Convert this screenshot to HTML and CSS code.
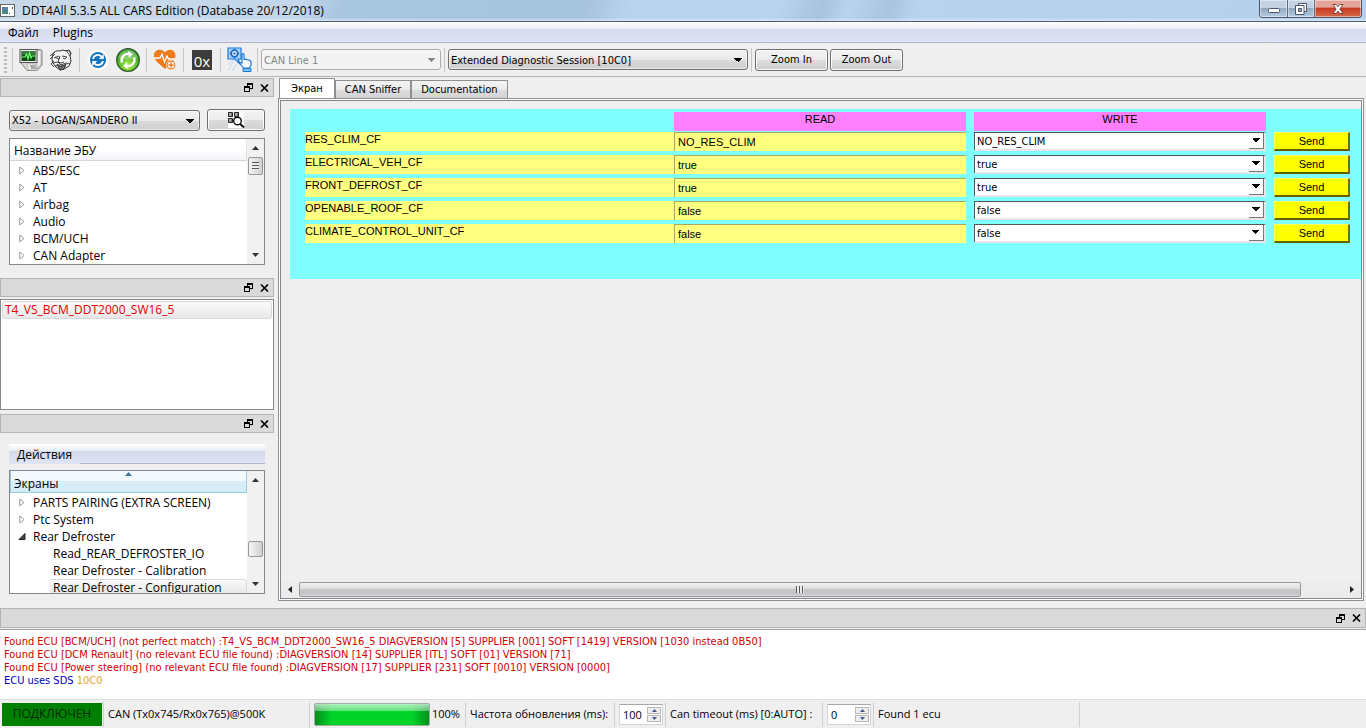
FILE: index.html
```html
<!DOCTYPE html>
<html lang="ru">
<head>
<meta charset="utf-8">
<title>DDT4All</title>
<link rel="stylesheet" href="styles.css">
</head>
<body>
<svg class="defs" aria-hidden="true">
  <symbol id="float" viewBox="0 0 9 9"><path d="M3 0h6v6H6V5h2V2H4v1H3zM0 3h6v6H0zM1 5v3h4V5z" fill="#000" fill-rule="evenodd"/></symbol>
  <symbol id="close" viewBox="0 0 9 8"><path d="M1 0.5l7 7M8 0.5l-7 7" stroke="#000" stroke-width="1.6" fill="none"/></symbol>
  <symbol id="closed" viewBox="0 0 6 9"><path d="M.8 1v7L5 4.500z" fill="#fff" stroke="#999"/></symbol>
  <symbol id="open" viewBox="0 0 7 7"><path d="M6.500 0.500v6h-6z" fill="#444" stroke="#222"/></symbol>
  <symbol id="up" viewBox="0 0 7 4"><path d="M0 4L3.500 0 7 4z" fill="#333"/></symbol>
  <symbol id="down" viewBox="0 0 7 4"><path d="M0 0h7L3.500 4z" fill="#333"/></symbol>
</svg>

<header class="titlebar">
  <svg class="app-icon" width="15" height="13" viewBox="0 0 15 13"><rect x=".5" y=".5" width="14" height="12" fill="#fff" stroke="#666"/><rect x="2" y="3" width="6" height="7" fill="#4a8a80"/><path d="M2 3h6v3H2z" fill="#5a7fa8"/><path d="M9.500 9v1M12.500 3v2" stroke="#555"/></svg>
  <h1>DDT4All 5.3.5 ALL CARS Edition (Database 20/12/2018)</h1>
  <div class="win-buttons">
    <button class="win min" aria-label="Minimize"><svg width="12" height="5"><rect x=".5" y=".5" width="11" height="4" rx="1" fill="#fff" stroke="#4a5568"/></svg></button>
    <button class="win max" aria-label="Restore"><svg width="12" height="12"><path d="M3.500.5h8v8h-8z" fill="#fff" stroke="#4a5568"/><path d="M.5 2.500h8.500v9H.5z" fill="#fff" stroke="#4a5568"/><path d="M3.500 5.500h3v3h-3z" fill="#9ab" stroke="#4a5568"/></svg></button>
    <button class="win shut" aria-label="Close"><svg width="12" height="10"><path d="M1 .5h3l2 2.200L8 .5h3L7.900 5l3.100 4.500H8L6 7.200 4 9.500H1L4.100 5z" fill="#fff" stroke="#5c3030" stroke-width=".8"/></svg></button>
  </div>
</header>
<nav class="menubar"><button>Файл</button><button>Plugins</button></nav>

<div class="toolbar">
  <span class="grip"></span><span class="sep"></span>
  <button class="tool" aria-label="Monitor"><svg width="24" height="24" viewBox="0 0 24 24"><path d="M3 1.500h18q2 0 2 2V17l-5 5.500H8L2 15z" fill="#d4d4d0" stroke="#888"/><path d="M18 3l4-1v14l-4 5z" fill="#f2f2ee" stroke="#999" stroke-width=".6"/><rect x="1" y="1.500" width="17" height="13" fill="#eee" stroke="#555"/><rect x="2.500" y="3" width="14" height="10" fill="#0d4a12"/><path d="M2.500 3h14v4h-14z" fill="#3a7a3c"/><path d="M3 9h3l1.500-3 1.500 5 1.500-6 1.500 5 1-2h3.500" stroke="#6f6" stroke-width="1.200" fill="none"/><path d="M8 16h8l2 6H10z" fill="#efefeb" stroke="#aaa" stroke-width=".6"/><path d="M11 18h5M12 20h5" stroke="#666"/></svg></button>
  <button class="tool" aria-label="Expert"><svg width="24" height="24" viewBox="0 0 24 24" fill="none" stroke="#333"><path d="M4 6Q6 2 11 3l3-1 3 1 3-1 2 3-1 3 1 5-2 5-5 3-4 1-4-3-3-4-1-4z" fill="#f3f3f3"/><path d="M1 8l5-4M1 11l5-5M20 3l2 3M17 2l4 6M5 10l5-2M13 8l5 1M6 9l3 2 2-1M14 10l2 1 2-2M11 8l-2 6 3 1 3-1M4 15l5-1 3 3 5-2 4 1M6 18l6-1 5 1M10 20l5 1M5 13l-3 3 3 3" stroke-width=".9"/><path d="M8 16l4 3 5-3-2 5-4 1z" fill="#777"/></svg></button>
  <span class="sep"></span>
  <button class="tool" aria-label="Reconnect"><svg width="24" height="24" viewBox="0 0 24 24"><circle cx="12" cy="12" r="9.600" fill="#fff" stroke="#fff" stroke-width="2" stroke-dasharray="2 1"/><circle cx="12" cy="12" r="8" fill="#1474c4"/><path d="M7 11a5 5 0 0 1 9-2M17 13a5 5 0 0 1-9 2" stroke="#fff" stroke-width="1.800" fill="none"/><path d="M17.800 6v5h-5zM6.200 18v-5h5z" fill="#fff"/></svg></button>
  <button class="tool" aria-label="Refresh"><svg width="24" height="24" viewBox="0 0 24 24"><defs><radialGradient id="gg" cx=".5" cy=".75" r=".7"><stop offset="0" stop-color="#b5f04a"/><stop offset=".6" stop-color="#55b82c"/><stop offset="1" stop-color="#3b9a2e"/></radialGradient></defs><circle cx="12" cy="12" r="11.300" fill="url(#gg)" stroke="#31562b" stroke-width="1.300"/><path d="M3 10a9 8 0 0 1 18 0Q12 13 3 10z" fill="#fff" opacity=".25"/><path d="M6 14.500a6.300 6.300 0 0 1 7-8.500M18 9.500a6.300 6.300 0 0 1-7 8.500" fill="none" stroke="#fff" stroke-width="2.400"/><path d="M12 3l5 3-4 4zM12 21l-5-3 4-4z" fill="#fff"/></svg></button>
  <span class="sep"></span>
  <button class="tool" aria-label="Diagnostics"><svg width="24" height="24" viewBox="0 0 24 24"><path d="M12 4.500C9-.2 0 1 1 8.500 1.500 13 8 17 12 21c4-4 10-8 10.500-12.500C23 1 15-.2 12 4.500z" fill="#ee7a1a"/><path d="M1 10h6l2-4 2.500 8 2.500-6 1.500 3H23" stroke="#fff" stroke-width="1.300" fill="none"/><circle cx="18" cy="17" r="5" fill="#fff"/><circle cx="18" cy="17" r="3.900" fill="#fff" stroke="#ee7a1a" stroke-width="1.200"/><path d="M18 14.500v5M15.500 17h5" stroke="#ee7a1a" stroke-width="1.500"/></svg></button>
  <span class="sep"></span>
  <button class="tool hex" aria-label="Hex">0x</button>
  <span class="sep"></span>
  <button class="tool" aria-label="Manual request"><svg width="25" height="25" viewBox="0 0 25 25"><path d="M1 24L13 3M5 24L16 8M1 18l8-8" stroke="#c4dcf4" stroke-width="1"/><path d="M1 1h13v11h-3l2 5-5-5H1z" fill="#a9d2fb" stroke="#1b7ad8" stroke-width="1.200"/><circle cx="7.500" cy="6.500" r="3.300" fill="#fff" stroke="#1b6cc8" stroke-width="1.800"/><circle cx="7.500" cy="6.500" r="1.200" fill="#1b6cc8"/><path d="M7.500 1.800v1.500M7.500 9.700v1.500M2.800 6.500h1.500M10.700 6.500h1.500" stroke="#1b6cc8" stroke-width="1.500"/><path d="M15 7q1.500-1 2 .5v5l2-.3 1.500.8 2 .2 1.500 1.300V18l-1.500 3h-6L13 16.500q0-1.500 2-.5z" fill="#fff" stroke="#1b7ad8" stroke-width="1.200"/><path d="M16 21.500h8v3h-8z" fill="#7fc0ff" stroke="#1b7ad8"/></svg></button>
  <span class="sep"></span>
  <select class="combo line" aria-label="CAN line" disabled><option>CAN Line 1</option></select>
  <span class="sep"></span>
  <select class="combo session" aria-label="Session"><option>Extended Diagnostic Session [10C0]</option></select>
  <span class="sep"></span>
  <button class="push">Zoom In</button><button class="push">Zoom Out</button>
</div>

<main class="workspace">
  <aside class="side">
    <section class="dock">
      <div class="dock-title"><button aria-label="Float"><svg width="9" height="9"><use href="#float"/></svg></button><button aria-label="Close"><svg width="9" height="8"><use href="#close"/></svg></button></div>
      <div class="dock-body">
        <div class="vehicle">
          <select class="combo" aria-label="Vehicle"><option>X52 - LOGAN/SANDERO II</option></select>
          <button class="push scan" aria-label="Scan"><svg width="17" height="16" viewBox="0 0 17 16"><path d="M0 0h16v16H0z" fill="#fff"/><path d="M.5.5h4v4h-4zM6.500.5h4v4h-4zM.5 6.500h4v4h-4z" fill="#777" stroke="#222"/><path d="M2 1v3M8 1v3M2 7v3M6 6h3" stroke="#ddd"/><circle cx="9.500" cy="9" r="3.800" fill="#fff" stroke="#111" stroke-width="1.400"/><path d="M12.200 12l3.800 3.500" stroke="#111" stroke-width="2"/></svg></button>
        </div>
        <div class="tree">
          <div class="tree-main">
            <div class="tree-head">Название ЭБУ</div>
            <ul>
              <li><svg width="6" height="9"><use href="#closed"/></svg><span>ABS/ESC</span></li>
              <li><svg width="6" height="9"><use href="#closed"/></svg><span>AT</span></li>
              <li><svg width="6" height="9"><use href="#closed"/></svg><span>Airbag</span></li>
              <li><svg width="6" height="9"><use href="#closed"/></svg><span>Audio</span></li>
              <li><svg width="6" height="9"><use href="#closed"/></svg><span>BCM/UCH</span></li>
              <li><svg width="6" height="9"><use href="#closed"/></svg><span>CAN Adapter</span></li>
            </ul>
          </div>
          <div class="vscroll"><svg width="7" height="4"><use href="#up"/></svg><div class="track"><div class="thumb lined"></div></div><svg width="7" height="4"><use href="#down"/></svg></div>
        </div>
      </div>
    </section>

    <section class="dock">
      <div class="dock-title"><button aria-label="Float"><svg width="9" height="9"><use href="#float"/></svg></button><button aria-label="Close"><svg width="9" height="8"><use href="#close"/></svg></button></div>
      <ul class="ecu-list"><li>T4_VS_BCM_DDT2000_SW16_5</li></ul>
    </section>

    <section class="dock grow">
      <div class="dock-title"><button aria-label="Float"><svg width="9" height="9"><use href="#float"/></svg></button><button aria-label="Close"><svg width="9" height="8"><use href="#close"/></svg></button></div>
      <div class="dock-body actions-body">
        <div class="actions"><button>Действия</button><span></span></div>
        <div class="tree screens">
          <div class="tree-main">
            <div class="tree-head sorted"><svg width="7" height="4" viewBox="0 0 7 4"><path d="M0 4L3.500 0 7 4z" fill="#3d7594"/></svg>Экраны</div>
            <ul>
              <li><svg width="6" height="9"><use href="#closed"/></svg><span>PARTS PAIRING (EXTRA SCREEN)</span></li>
              <li><svg width="6" height="9"><use href="#closed"/></svg><span>Ptc System</span></li>
              <li><svg width="7" height="7"><use href="#open"/></svg><span>Rear Defroster</span></li>
              <li class="child"><span>Read_REAR_DEFROSTER_IO</span></li>
              <li class="child"><span>Rear Defroster - Calibration</span></li>
              <li class="child current"><span>Rear Defroster - Configuration</span></li>
            </ul>
          </div>
          <div class="vscroll"><svg width="7" height="4"><use href="#up"/></svg><div class="track low"><div class="thumb"></div></div><svg width="7" height="4"><use href="#down"/></svg></div>
        </div>
      </div>
    </section>
  </aside>

  <section class="content">
    <div class="tabs" role="tablist">
      <button role="tab" aria-selected="true" class="tab active">Экран</button><button role="tab" class="tab">CAN Sniffer</button><button role="tab" class="tab">Documentation</button>
    </div>
    <div class="pane"><div class="view">
      <form class="screen">
        <span class="col-head read-head">READ</span><span class="col-head write-head">WRITE</span>
        <label for="r1">RES_CLIM_CF</label><input id="r1" value="NO_RES_CLIM" readonly><select aria-label="RES_CLIM_CF write"><option>NO_RES_CLIM</option></select><button type="button">Send</button>
        <label for="r2">ELECTRICAL_VEH_CF</label><input id="r2" value="true" readonly><select aria-label="ELECTRICAL_VEH_CF write"><option>true</option></select><button type="button">Send</button>
        <label for="r3">FRONT_DEFROST_CF</label><input id="r3" value="true" readonly><select aria-label="FRONT_DEFROST_CF write"><option>true</option></select><button type="button">Send</button>
        <label for="r4">OPENABLE_ROOF_CF</label><input id="r4" value="false" readonly><select aria-label="OPENABLE_ROOF_CF write"><option>false</option></select><button type="button">Send</button>
        <label for="r5">CLIMATE_CONTROL_UNIT_CF</label><input id="r5" value="false" readonly><select aria-label="CLIMATE_CONTROL_UNIT_CF write"><option>false</option></select><button type="button">Send</button>
      </form>
      <div class="hscroll"><svg width="4" height="7" viewBox="0 0 4 7"><path d="M4 0v7L0 3.500z" fill="#222"/></svg><div class="htrack"><div class="hthumb"><i></i></div></div><svg width="4" height="7" viewBox="0 0 4 7"><path d="M0 0v7l4-3.500z" fill="#222"/></svg></div>
    </div></div>
  </section>
</main>

<section class="log-dock">
  <div class="dock-title"><button aria-label="Float"><svg width="9" height="9"><use href="#float"/></svg></button><button aria-label="Close"><svg width="9" height="8"><use href="#close"/></svg></button></div>
  <div class="log">
    <p>Found ECU [BCM/UCH] (not perfect match) :T4_VS_BCM_DDT2000_SW16_5 DIAGVERSION [5] SUPPLIER [001] SOFT [1419] VERSION [1030 instead 0B50]</p>
    <p>Found ECU [DCM Renault] (no relevant ECU file found) :DIAGVERSION [14] SUPPLIER [ITL] SOFT [01] VERSION [71]</p>
    <p>Found ECU [Power steering] (no relevant ECU file found) :DIAGVERSION [17] SUPPLIER [231] SOFT [0010] VERSION [0000]</p>
    <p class="info">ECU uses SDS <b>10C0</b></p>
  </div>
</section>

<footer class="status">
  <div class="cell connected"><span>ПОДКЛЮЧЕН</span></div>
  <div class="cell port">CAN (Tx0x745/Rx0x765)@500K</div>
  <div class="cell progress"><span class="bar" role="progressbar" aria-label="Progress" aria-valuenow="100"></span>100%</div>
  <div class="cell rate"><label for="rate">Частота обновления (ms):</label></div>
  <div class="cell spin-cell"><span class="spin"><input id="rate" type="number" value="100"><span class="steps"><button aria-label="More"><svg width="5" height="3" viewBox="0 0 7 4"><path d="M0 4L3.500 0 7 4z" fill="#44549a"/></svg></button><button aria-label="Less"><svg width="5" height="3" viewBox="0 0 7 4"><path d="M0 0h7L3.500 4z" fill="#44549a"/></svg></button></span></span></div>
  <div class="cell timeout"><label for="timeout">Can timeout (ms) [0:AUTO] :</label></div>
  <div class="cell spin-cell"><span class="spin"><input id="timeout" type="number" value="0"><span class="steps"><button aria-label="More"><svg width="5" height="3" viewBox="0 0 7 4"><path d="M0 4L3.500 0 7 4z" fill="#44549a"/></svg></button><button aria-label="Less"><svg width="5" height="3" viewBox="0 0 7 4"><path d="M0 0h7L3.500 4z" fill="#44549a"/></svg></button></span></span></div>
  <div class="cell found">Found 1 ecu</div>
</footer>
</body>
</html>
```
FILE: styles.css
```css
:root {
  --ui: "Open Sans", "Noto Sans", sans-serif;
  --small: "DejaVu Sans Condensed", "Noto Sans", sans-serif;
  --sans: "Liberation Sans", sans-serif;
  --face: #efefef;
}
* { box-sizing: border-box; }
body {
  margin: 0;
  min-height: 100vh;
  display: flex;
  flex-direction: column;
  background: var(--face);
  color: #000;
  font: 12px/17px var(--ui);
}
ul, p, h1 { margin: 0; padding: 0; list-style: none; }
button, select, input { font: inherit; color: inherit; margin: 0; padding: 0; border-radius: 0; }
button { background: none; border: 0; }
svg { display: block; flex: none; }
.defs { position: absolute; width: 0; height: 0; }

.titlebar {
  height: 22px;
  display: flex;
  align-items: center;
  padding-right: 4px;
  border-bottom: 1px solid #4c5c70;
  background:
    linear-gradient(#fff0 85%, #ffffff80),
    linear-gradient(110deg, #c8d8e8 0, #c3d7ea 22%, #a9c6e0 25%, #a7c4df 43%, #b8d3ed 46%, #b8d3ed 57%, #a6c3df 60%, #b8d3ed 62%, #a8c5e0 65%, #b8d3ed 67%, #b4d0ea 100%);
}
h1 { flex: 1; font-size: 12px; font-weight: 400; padding-left: 7px; }
.win-buttons { align-self: flex-start; display: flex; border: 1px solid #46566b; border-top: 0; border-radius: 0 0 4px 4px; overflow: hidden; }
.win { height: 17px; display: grid; place-items: center; background: linear-gradient(#c3d3e3 45%, #94a9bf 50%, #b4cbe0); box-shadow: inset 0 0 0 1px #ffffff70; }
.min { width: 28px; padding-top: 4px; border-right: 1px solid #5d6d80; }
.max { width: 27px; border-right: 1px solid #5d6d80; }
.shut { width: 46px; background: linear-gradient(#e3a598 40%, #c43a22 50%, #d9694a); }

.menubar {
  height: 21px;
  display: flex;
  gap: 14px;
  padding-left: 8px;
  border-bottom: 1px solid #b0b4c0;
  background: linear-gradient(#fff 0, #e9edf6 34%, #d4daed 35%, #e0e5f4);
}

.toolbar {
  height: 34px;
  display: flex;
  align-items: center;
  padding-left: 4px;
  border-bottom: 1px solid #b4b4b4;
  font: 11px/14px var(--small);
}
.grip { width: 3px; height: 26px; margin-right: 2px; background: repeating-linear-gradient(#bbb 0 2px, #efefef 2px 4px); }
.sep { width: 1px; height: 24px; margin: 0 3px; background: #c6c6c6; }
.tool { width: 30px; height: 28px; display: grid; place-items: center; }
.tool.hex { width: 20px; height: 20px; margin: 0 5px; place-items: end center; background: #3c3c3c; color: #fff; font: 15px/18px var(--ui); }

.combo {
  height: 21px;
  appearance: none;
  padding: 1px 20px 0 2px;
  border: 1px solid #707070;
  border-radius: 3px;
  background:
    conic-gradient(from 315deg at 50% 100%, #000 90deg, #0000 0) right 5px top 8px / 8px 4px no-repeat,
    linear-gradient(#f4f4f4, #e8e8e8 50%, #d9d9d9 51%, #cfcfcf);
  box-shadow: inset 0 0 0 1px #fafafaa0;
  font: 11px/17px var(--small);
}
.combo:disabled { border-color: #adadad; background: conic-gradient(from 315deg at 50% 100%, #888 90deg, #0000 0) right 5px top 8px / 8px 4px no-repeat, #f3f3f3; color: #888; opacity: 1; }
.line { width: 180px; }
.session { width: 300px; }
.push {
  width: 73px;
  height: 22px;
  border: 1px solid #707070;
  border-radius: 3px;
  background: linear-gradient(#f3f3f3, #ebebeb 50%, #dcdcdc 51%, #cfcfcf);
  box-shadow: inset 0 0 0 1px #fcfcfc;
  font: 11px/14px var(--small);
}
.push + .push { margin-left: 2px; }

.workspace { flex: 1; display: flex; gap: 4px; padding: 0 2px 7px 0; }
.side { width: 274px; padding-top: 1px; display: flex; flex-direction: column; }
.dock.grow { flex: 1; display: flex; flex-direction: column; }
.dock-title { height: 20px; display: flex; justify-content: flex-end; align-items: center; gap: 7px; padding-right: 4px; border: 1px solid #b4b4b4; background: #dadada; }
.side .dock-title { height: 19px; }
.dock-body { padding: 12px 9px 13px; }
.vehicle { display: flex; align-items: center; gap: 7px; margin-bottom: 7px; }
.vehicle .combo { flex: 1; min-width: 0; }
.push.scan { width: 58px; display: grid; place-items: center; }

.tree { height: 127px; display: flex; border: 1px solid #828790; background: #fff; overflow: hidden; }
.tree-main { flex: 1; min-width: 0; }
.tree-head { height: 22px; padding: 3px 4px 0; border-bottom: 1px solid #d5d5d5; border-right: 1px solid #e2e2e2; background: linear-gradient(#fff 50%, #f2f4f7); }
.tree-head.sorted { display: grid; padding: 0 3px; line-height: 16px; border: 1px solid #96cfe4; border-top: 0; background: linear-gradient(#f2fafd 45%, #d9eef7 50%, #d4ebf5); }
.tree-head.sorted svg { justify-self: center; margin-top: 1px; }
.tree ul { padding-top: 1px; }
.tree li { height: 17px; display: flex; align-items: center; padding-left: 8px; white-space: nowrap; }
.tree li svg { width: 8px; }
.tree li span { padding-left: 7px; }
.tree li.child { margin-left: 40px; padding-left: 0; }
.tree li.child span { padding-left: 3px; }
.tree li.current { border: solid #d9d9d9; border-width: 1px 1px 1px 0; border-radius: 3px; background: linear-gradient(#fafafa, #e5e5e5); }
.vscroll { width: 17px; display: flex; flex-direction: column; align-items: center; padding: 7px 0; background: #f1f1f1; }
.track { flex: 1; padding-top: 7px; }
.track.low { display: flex; flex-direction: column; justify-content: flex-end; padding-bottom: 25px; }
.thumb { width: 15px; height: 18px; border: 1px solid #979797; border-radius: 2px; background: linear-gradient(90deg, #f5f5f5, #e3e3e3 50%, #cfcfd2); }
.track.low .thumb { height: 16px; }
.lined::before { content: ""; display: block; width: 7px; height: 8px; margin: 4px 3px; background: repeating-linear-gradient(#555 0 1px, #eee 1px 3px); }

.ecu-list { height: 111px; margin: 2px 0 4px; padding: 1px; border: 1px solid #828790; background: #fff; }
.ecu-list li { height: 18px; padding-left: 2px; border: 1px solid #d9d9d9; border-radius: 3px; background: linear-gradient(#fafafa, #e8e8e8); color: #e00000; line-height: 16px; }
.actions-body { flex: 1; display: flex; flex-direction: column; gap: 6px; padding: 11px 9px 7px; }
.actions { height: 20px; display: flex; background: linear-gradient(#fff 0, #e9edf6 34%, #d4daed 35%, #e0e5f4); }
.actions button { padding: 0 8px; }
.actions span { flex: 1; border-bottom: 1px solid #b0b8cc; }
.screens { flex: 1 0 122px; height: 122px; }

.content { flex: 1; min-width: 0; display: flex; flex-direction: column; }
.tabs { display: flex; align-items: flex-end; padding: 1px 0 0 1px; font: 11px/14px var(--small); }
.tab { height: 18px; padding: 0 9px; border: 1px solid #8e8f8f; border-bottom: 0; background: linear-gradient(#f3f3f3, #ebebeb 50%, #dcdcdc 51%, #d4d4d4); }
.tab.active { height: 20px; padding: 0 11px; background: #fff; }
.pane { flex: 1; display: flex; padding: 1px; border: 1px solid #8e8f8f; background: #fff; }
.view { flex: 1; min-width: 0; display: flex; flex-direction: column; border: 1px solid #828790; background: var(--face); }
.screen {
  display: grid;
  grid-template-columns: 369fr 292fr 300fr 84fr;
  grid-template-rows: 20px;
  grid-auto-rows: 23px;
  align-items: start;
  margin: 8px 0 0 9px;
  padding: 3px 11px 32px 15px;
  background: #80ffff;
  font: 11px/14px var(--sans);
}
.screen > * { height: 19px; }
.screen label { background: #ffff80; }
.screen input { min-width: 0; padding: 0 0 0 3px; border: 1px solid #a8a860; border-width: 1px 0 0 1px; background: #ffff80; }
.screen select {
  min-width: 0;
  margin-left: 8px;
  appearance: none;
  padding: 1px 0 0 2px;
  border: 1px solid;
  border-color: #555 #e6e6e6 #e6e6e6 #555;
  border-width: 1px 2px 2px 1px;
  background:
    conic-gradient(from 315deg at 50% 100%, #000 90deg, #0000 0) right 4px top 5px / 8px 4px no-repeat,
    linear-gradient(#777, #777) right 0 top 0 / 1px 100% no-repeat,
    linear-gradient(#777, #777) right 0 bottom 0 / 15px 1px no-repeat,
    #fff;
  font: 11px/14px var(--small);
}
.screen button { margin-left: 8px; border: 1px solid; border-color: #ffff60 #707000 #606000 #ffff60; border-width: 1px 2px 2px 1px; background: #ff0; }
.col-head { background: #ff80ff; text-align: center; }
.read-head { grid-column: 2; }
.write-head { grid-column: 3; margin-left: 8px; }
.screen .write-head + label { grid-column: 1; }

.hscroll { height: 17px; display: flex; align-items: center; gap: 7px; margin-top: auto; padding: 0 7px; background: #ececec; }
.htrack { flex: 1; }
.hthumb { width: 96%; height: 15px; display: grid; place-items: center; border: 1px solid #979797; border-radius: 2px; background: linear-gradient(#f3f3f3, #dcdcde 45%, #c8c8cc 50%, #c4c4c8 80%, #d8d8d8); }
.hthumb i { width: 8px; height: 7px; background: repeating-linear-gradient(90deg, #555 0 1px, #eee 1px 3px); }

.log { height: 71px; margin-top: 1px; padding: 5px 4px; border-top: 1px solid #a0a0a0; border-bottom: 1px solid #ddd; background: #fff; font: 11px/13px var(--small); color: #d00000; }
.log .info { color: #0000b8; }
.log b { font-weight: 400; color: #e8a820; }

.status { height: 28px; display: flex; align-items: center; padding-left: 2px; font-size: 11px; line-height: 22px; white-space: nowrap; }
.cell { height: 25px; display: flex; align-items: center; padding-left: 4px; border-right: 1px solid #d0d0d0; }
.connected { width: 102px; padding: 0 1px 0 0; }
.connected span { flex: 1; height: 23px; background: #008000; color: #002800; text-align: center; font-size: 12px; }
.port { width: 206px; }
.progress { width: 156px; gap: 2px; }
.bar { width: 116px; height: 23px; border: 1px solid #a0b0a0; border-radius: 2px; background: linear-gradient(#ffffffb0 0, #ffffff60 32%, #fff0 36%), linear-gradient(90deg, #00901c, #00d328 15%, #00d328 85%, #00901c); }
.rate { width: 149px; }
.spin-cell { width: 51px; }
.spin { width: 44px; height: 21px; display: flex; padding: 2px 1px 2px 3px; border: 1px solid #d4d4d4; border-top-color: #a8a8a8; background: #fff; }
.spin input { flex: 1; min-width: 0; border: 0; background: none; appearance: textfield; line-height: 15px; }
.spin input::-webkit-inner-spin-button { display: none; }
.steps { width: 14px; display: grid; gap: 1px; }
.steps button { display: grid; place-items: center; border: 1px solid #b8b8b8; background: #eee; }
.timeout { width: 157px; }
.found { width: 206px; }
```
